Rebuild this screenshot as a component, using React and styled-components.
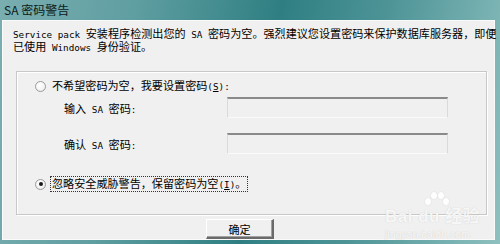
import styled, { createGlobalStyle } from "styled-components";

// SA 密码警告 dialog

const Global = createGlobalStyle`
  html, body {
    margin: 0;
    padding: 0;
    width: 500px;
    height: 244px;
    overflow: hidden;
  }
  body {
    font-family: "Noto Sans CJK SC", "Liberation Sans", sans-serif;
    font-size: 11.1px;
    color: #000;
  }
`;

const App = () => {
  return (
    <>
      <Global />
      <Window>
        <TitleBar>
          <Title>SA 密码警告</Title>
        </TitleBar>
        <Client>
          <Message>
            <Line>
              <Latin>Service pack </Latin>安装程序检测出您的<Latin> SA </Latin>密码为空。强烈建议您设置密码来保护数据库服务器，即便
            </Line>
            <Line>
              已使用<Latin> Windows </Latin>身份验证。
            </Line>
          </Message>

          <Group>
            <OptionRow>
              <Radio />
              <OptionText>
                不希望密码为空，我要设置密码<Latin>(<u>S</u>):</Latin>
              </OptionText>
            </OptionRow>

            <FieldRow>
              <FieldLabel>
                输入<Latin> SA </Latin>密码<Latin>:</Latin>
              </FieldLabel>
              <Input disabled />
            </FieldRow>

            <FieldRow $gap={15}>
              <FieldLabel>
                确认<Latin> SA </Latin>密码<Latin>:</Latin>
              </FieldLabel>
              <Input disabled />
            </FieldRow>

            <OptionRow $gap={23}>
              <Radio $checked />
              <OptionText $focused>
                忽略安全威胁警告，保留密码为空<Latin>(<u>I</u>)</Latin>。
              </OptionText>
            </OptionRow>
          </Group>

          <Footer>
            <Button>确定</Button>
          </Footer>

          <Watermark>
            <Paw>
              <span /> <span /> <span /> <span />
            </Paw>
            <MarkTop>Bai du 经验</MarkTop>
            <MarkUrl>jingyan.baidu.com</MarkUrl>
          </Watermark>
        </Client>
      </Window>
    </>
  );
};

// Styled components
const Window = styled.div`
  width: 500px;
  height: 244px;
  box-sizing: border-box;
  padding: 0 5px 4px 2px;
  display: flex;
  flex-direction: column;
  background: linear-gradient(
    100deg,
    #7aaeb1 0%,
    #5f9ea1 25%,
    #2f7f82 52%,
    #4e9497 72%,
    #8ec0bf 100%
  );
`;

const TitleBar = styled.div`
  height: 20px;
  display: flex;
  align-items: center;
  padding-left: 2px;
`;

const Title = styled.div`
  font-size: 12px;
  color: #0a1a1a;
  line-height: 1;
`;

const Client = styled.div`
  position: relative;
  flex: 1;
  background: #f0f0f0;
  border: 1px solid #fafafa;
  display: flex;
  flex-direction: column;
`;

const Message = styled.div`
  padding: 6px 0 0 10px;
`;

const Line = styled.div`
  height: 13px;
  line-height: 13px;
  white-space: nowrap;
`;

const Latin = styled.span`
  font-family: "DejaVu Sans Mono", "Liberation Mono", monospace;
  font-size: 9.3px;
  white-space: pre;
`;

const Group = styled.div`
  margin: 18px 7px 0 13px;
  height: 144px;
  box-sizing: border-box;
  border: 1px solid #c8c8c8;
  box-shadow: inset 1px 1px 0 #fff, 1px 1px 0 #fff;
  padding: 7px 0 0 18px;
  display: flex;
  flex-direction: column;
`;

const OptionRow = styled.div`
  display: flex;
  align-items: center;
  height: 14px;
  margin-top: ${(p) => p.$gap || 0}px;
`;

const Radio = styled.span`
  position: relative;
  width: 9px;
  height: 9px;
  border-radius: 50%;
  border: 1px solid #9a9a9a;
  background: radial-gradient(circle at 40% 35%, #fff 0%, #f4f4f4 60%, #dcdcdc 100%);
  margin-right: 4px;
  flex-shrink: 0;

  &::after {
    content: "";
    display: ${(p) => (p.$checked ? "block" : "none")};
    position: absolute;
    left: 2.5px;
    top: 2.5px;
    width: 4px;
    height: 4px;
    border-radius: 50%;
    background: #1a1a1a;
  }
`;

const OptionText = styled.span`
  line-height: 12px;
  padding: 0 1px;
  border: 1px dotted ${(p) => (p.$focused ? "#333" : "transparent")};
  white-space: nowrap;
`;

const FieldRow = styled.div`
  display: grid;
  grid-template-columns: 163px 221px;
  align-items: center;
  padding-left: 29px;
  margin-top: ${(p) => p.$gap || 4}px;
`;

const FieldLabel = styled.span`
  white-space: nowrap;
`;

const Input = styled.input`
  height: 21px;
  box-sizing: border-box;
  margin: 0;
  padding: 0;
  background: #f0f0f0;
  border-style: solid;
  border-width: 2px 1px 1px 1px;
  border-color: #8a8a8a #dadada #fafafa #dadada;
`;

const Footer = styled.div`
  display: flex;
  padding: 4px 0 0 203px;
`;

const Button = styled.button`
  width: 68px;
  height: 20px;
  box-sizing: border-box;
  margin: 0;
  padding: 0;
  font-family: "Noto Sans CJK SC", sans-serif;
  font-size: 11.1px;
  color: #000;
  background: #f0f0f0;
  border-style: solid;
  border-width: 1px 2px 2px 1px;
  border-color: #fff #6a6a6a #6a6a6a #fff;
  box-shadow: inset -1px -1px 0 #a0a0a0;
`;

const Watermark = styled.div`
  position: absolute;
  left: 382px;
  top: 170px;
  width: 110px;
  color: rgba(255, 255, 255, 0.85);
  text-shadow: 0 0 1px rgba(160, 160, 160, 0.5);
  pointer-events: none;
`;

const Paw = styled.div`
  position: absolute;
  left: 40px;
  top: 0;
  width: 22px;
  height: 22px;

  span {
    position: absolute;
    width: 6px;
    height: 7px;
    border-radius: 50%;
    background: rgba(255, 255, 255, 0.9);
    box-shadow: 0 0 1px #bbb;
  }
  span:nth-child(1) { left: 0; top: 7px; }
  span:nth-child(2) { left: 6px; top: 1px; }
  span:nth-child(3) { left: 13px; top: 1px; }
  span:nth-child(4) { left: 18px; top: 7px; }
`;

const MarkTop = styled.div`
  margin-top: 17px;
  font-family: "Liberation Sans", "Noto Sans CJK SC", sans-serif;
  font-size: 17px;
  font-weight: bold;
  line-height: 18px;
  letter-spacing: 0.5px;
`;

const MarkUrl = styled.div`
  margin-top: 2px;
  font-family: "Liberation Sans", sans-serif;
  font-size: 10.5px;
  line-height: 12px;
`;

export default App;
